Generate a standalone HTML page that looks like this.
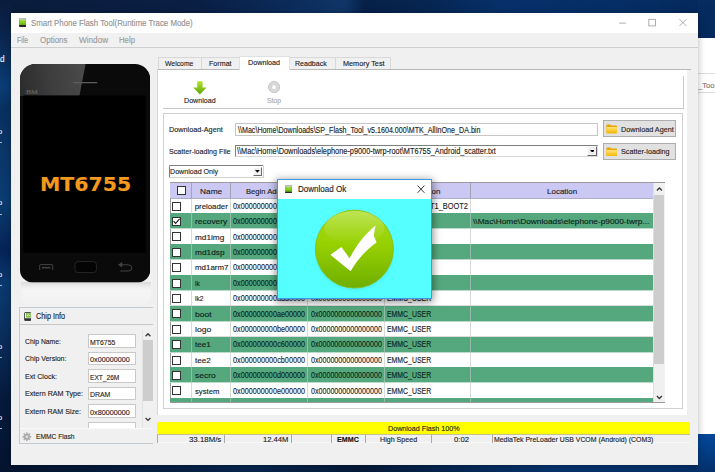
<!DOCTYPE html>
<html><head><meta charset="utf-8"><title>Smart Phone Flash Tool</title><style>
html,body{margin:0;padding:0}
body{width:715px;height:472px;overflow:hidden;position:relative;background:#08203f}
body>div,.a{position:absolute}
.t{position:absolute;white-space:pre;transform-origin:0 0;-webkit-text-stroke:0.13px}
#desk{left:0;top:0;width:715px;height:472px;background:
 linear-gradient(180deg,rgba(0,0,0,0) 0,rgba(0,0,0,0) 100%),
 linear-gradient(100deg,#0a2142 0%,#0c2a55 30%,#08305f 55%,#062450 75%,#071d40 100%)}
</style></head><body>
<div id="desk"></div>
<div style="left:0.00px;top:0.00px;width:715.00px;height:14.00px;background:linear-gradient(90deg,#0a1c3c 0px,#0a1f44 200px,#0a2a58 280px,#103566 345px,#062048 365px,#062652 430px,#06306a 500px,#052d64 650px,#06275a 715px);"></div>
<div style="left:0.00px;top:0.00px;width:12.00px;height:472.00px;background:linear-gradient(180deg,#0a1c3c 0px,#0a2750 40px,#0a3d75 86px,#08305f 110px,#0a3668 150px,#0b3c72 200px,#062455 250px,#0a3a70 285px,#0a2f5e 330px,#051a3c 400px,#04142f 472px);"></div>
<div style="left:0.00px;top:464.00px;width:715.00px;height:8.00px;background:linear-gradient(90deg,#04142f 0,#07264f 35%,#051a3a 50%,#06346e 77%,#05306a 100%);"></div>
<div style="left:697.00px;top:0.00px;width:18.00px;height:40.00px;background:linear-gradient(180deg,#062c60,#05295a);"></div>
<div style="left:697.00px;top:432.00px;width:18.00px;height:40.00px;background:linear-gradient(180deg,#03489a 0,#033f88 45%,#052f6a 100%);"></div>
<div class="t" style="left:0.00px;top:54px;font:8.21px/11px 'Liberation Sans',sans-serif;color:#f4f4f4;">d</div>
<div class="t" style="left:-2.20px;top:126px;font:7.99px/11px 'Liberation Sans',sans-serif;color:#e6e6e6;">o</div>
<div style="left:0.00px;top:142.10px;width:1.80px;height:1.00px;background:#aeb6c6;"></div>
<div class="t" style="left:-2.20px;top:197px;font:7.99px/11px 'Liberation Sans',sans-serif;color:#e6e6e6;">o</div>
<div style="left:0.00px;top:213.60px;width:1.80px;height:1.00px;background:#aeb6c6;"></div>
<div class="t" style="left:-2.20px;top:269px;font:7.99px/11px 'Liberation Sans',sans-serif;color:#e6e6e6;">o</div>
<div style="left:0.00px;top:285.20px;width:1.80px;height:1.00px;background:#aeb6c6;"></div>
<div class="t" style="left:-2.20px;top:341px;font:7.99px/11px 'Liberation Sans',sans-serif;color:#e6e6e6;">o</div>
<div style="left:0.00px;top:356.80px;width:1.80px;height:1.00px;background:#aeb6c6;"></div>
<div class="t" style="left:-2.20px;top:412px;font:7.99px/11px 'Liberation Sans',sans-serif;color:#e6e6e6;">o</div>
<div style="left:0.00px;top:428.40px;width:1.80px;height:1.00px;background:#aeb6c6;"></div>
<div style="left:698.00px;top:37.50px;width:18.00px;height:396.10px;background:#fff;"></div>
<div style="left:698.00px;top:73.20px;width:18.00px;height:1.00px;background:#dcdcdc;"></div>
<div style="left:698.00px;top:91.60px;width:18.00px;height:1.00px;background:#dcdcdc;"></div>
<div class="t" style="left:698.40px;top:80px;font:7.99px/11px 'Liberation Sans',sans-serif;color:#777;transform:scaleX(0.9523);">_Too</div>
<div style="left:11.20px;top:13.00px;width:687.10px;height:451.80px;background:#f0f0f0;box-shadow:0 1px 7px 0 rgba(0,0,0,.30);"></div>
<div style="left:11.20px;top:13.00px;width:687.10px;height:20.30px;background:#fff;"></div>
<svg class="a" style="left:18.9px;top:18.1px" width="7.2" height="9" viewBox="0 0 72 90"><defs><linearGradient id="gi" x1="0" y1="0" x2="0" y2="1"><stop offset="0" stop-color="#a4e04a"/><stop offset="0.45" stop-color="#86cf22"/><stop offset="1" stop-color="#4f9c0e"/></linearGradient></defs><rect x="1" y="1" width="70" height="88" rx="7" fill="#8a8a8a"/><rect x="5" y="14" width="62" height="66" fill="url(#gi)"/><rect x="5" y="4" width="62" height="11" fill="#e2e2e2"/><rect x="2" y="69" width="68" height="20" rx="4" fill="#262626"/></svg>
<div class="t" style="left:31.00px;top:17px;font:9.29px/12px 'Liberation Sans',sans-serif;color:#8f8f8f;transform:scaleX(0.8454);">Smart Phone Flash Tool(Runtime Trace Mode)</div>
<svg class="a" style="left:610px;top:14px" width="88" height="19" viewBox="0 0 88 19"><g stroke="#9a9a9a" stroke-width="0.8" fill="none"><path d="M9.2 9.1H16"/><rect x="38.8" y="5.3" width="6.6" height="6.6"/><path d="M69.5 5.2l6.8 6.8M76.3 5.2l-6.8 6.8"/></g></svg>
<div style="left:11.20px;top:33.30px;width:687.10px;height:13.70px;background:#f1f1f1;"></div>
<div style="left:11.20px;top:47.00px;width:687.10px;height:0.80px;background:#cfcfcf;"></div>
<div class="t" style="left:16.90px;top:34px;font:8.42px/12px 'Liberation Sans',sans-serif;color:#9a9a9a;transform:scaleX(0.8107);">File</div>
<div class="t" style="left:39.60px;top:34px;font:8.42px/12px 'Liberation Sans',sans-serif;color:#9a9a9a;transform:scaleX(0.9511);">Options</div>
<div class="t" style="left:78.60px;top:34px;font:8.42px/12px 'Liberation Sans',sans-serif;color:#9a9a9a;transform:scaleX(0.9750);">Window</div>
<div class="t" style="left:118.60px;top:34px;font:8.42px/12px 'Liberation Sans',sans-serif;color:#9a9a9a;transform:scaleX(0.9239);">Help</div>
<div style="left:20.50px;top:282.00px;width:130.00px;height:23.50px;background:linear-gradient(#d9d9d9 0,#ececec 18%,#f5f5f5 34%,#f4f4f4 60%,#f1f1f1 100%);border-radius:0 0 12px 12px;"></div>
<svg class="a" style="left:20.1px;top:64.1px" width="130.4" height="218.6" viewBox="0 0 130.4 218.6"><defs>
<clipPath id="pc"><path d="M15.5 0H114.9A15.5 15.5 0 0 1 130.4 15.5V205.9A12.6 12.6 0 0 1 117.80000000000001 218.5H12.6A12.6 12.6 0 0 1 0 205.9V15.5A15.5 15.5 0 0 1 15.5 0Z"/></clipPath>
<linearGradient id="pg" x1="0" y1="0" x2="1" y2="0"><stop offset="0" stop-color="#2e2e2e"/><stop offset="0.5" stop-color="#404040"/><stop offset="1" stop-color="#4b4b4b"/></linearGradient>
<linearGradient id="pv" x1="0" y1="0" x2="0" y2="1"><stop offset="0" stop-color="#000" stop-opacity="0"/><stop offset="1" stop-color="#000" stop-opacity=".05"/></linearGradient>
</defs>
<g clip-path="url(#pc)"><rect width="130.4" height="218.6" fill="#0a0a0a"/>
<path d="M0 0H65.6L59.4 32H0z" fill="url(#pg)"/><path d="M0 0H65.6L59.4 32H0z" fill="url(#pv)"/>
<rect x="3.4" y="31.4" width="122.4" height="157.4" fill="#000"/>
<rect x="53" y="18" width="24.4" height="1.3" rx=".6" fill="#5c5c5c"/>
</g>
<g fill="none" stroke="#444" stroke-width="1"><path d="M19.7 206v-4.6q0-.8.8-.8h11.4q.8 0 .8.8v4.6"/><path d="M22 203.7h8.4" stroke-width="1.5"/>
<rect x="55" y="197.6" width="21.4" height="11" rx="3" fill="#040404" stroke="#262626"/>
<path d="M101 200.8h7.6a3.1 3.1 0 0 1 0 6.2h-8.4"/></g><path d="M98 200.8l4.2-2.7v5.4z" fill="#444"/>
</svg>
<div class="t" style="left:26.20px;top:87px;font:7.13px/10px 'Liberation Serif',serif;color:#666;transform:scaleX(1.0635);">BM</div>
<div class="t" style="left:40.30px;top:172px;font:bold 19.5px/25px 'DejaVu Sans',sans-serif;color:#f39a1e;transform:scaleX(1.0497);">MT6755</div>
<div style="left:19.10px;top:307.40px;width:133.90px;height:136.80px;border:1px solid #c3c9d0;border-right:none;box-sizing:border-box;"></div>
<div style="left:19.60px;top:324.00px;width:133.40px;height:0.80px;background:#c6c6c6;"></div>
<svg class="a" style="left:23.6px;top:311.7px" width="7.6" height="9" viewBox="0 0 76 90"><rect x="5" y="5" width="66" height="80" rx="7" fill="#fbfbfb" stroke="#505050" stroke-width="10"/><rect x="20" y="12" width="46" height="44" fill="#7cc242"/><path d="M30 40l14-14 14 14" fill="none" stroke="#f4ffe8" stroke-width="9"/><rect x="6" y="62" width="64" height="24" rx="4" fill="#2e2e2e"/></svg>
<div class="t" style="left:36.00px;top:311px;font:8.21px/11px 'Liberation Sans',sans-serif;color:#222;transform:scaleX(0.8886);">Chip Info</div>
<div class="t" style="left:25.00px;top:336px;font:7.99px/11px 'Liberation Sans',sans-serif;color:#222;transform:scaleX(0.8534);">Chip Name:</div>
<div style="left:88.00px;top:334.40px;width:47.80px;height:13.20px;background:#fff;border:1px solid #c9c9c9;box-sizing:border-box;"></div>
<div class="t" style="left:90.20px;top:337px;font:7.99px/11px 'Liberation Sans',sans-serif;color:#222;transform:scaleX(0.8665);">MT6755</div>
<div class="t" style="left:25.00px;top:353px;font:7.99px/11px 'Liberation Sans',sans-serif;color:#222;transform:scaleX(0.8711);">Chip Version:</div>
<div style="left:88.00px;top:351.90px;width:47.80px;height:13.20px;background:#fff;border:1px solid #c9c9c9;box-sizing:border-box;"></div>
<div class="t" style="left:90.20px;top:354px;font:7.99px/11px 'Liberation Sans',sans-serif;color:#222;transform:scaleX(0.9048);">0x00000000</div>
<div class="t" style="left:25.00px;top:371px;font:7.99px/11px 'Liberation Sans',sans-serif;color:#222;transform:scaleX(0.8898);">Ext Clock:</div>
<div style="left:88.00px;top:369.40px;width:47.80px;height:13.20px;background:#fff;border:1px solid #c9c9c9;box-sizing:border-box;"></div>
<div class="t" style="left:90.20px;top:372px;font:7.99px/11px 'Liberation Sans',sans-serif;color:#222;transform:scaleX(0.8247);">EXT_26M</div>
<div class="t" style="left:25.00px;top:388px;font:7.99px/11px 'Liberation Sans',sans-serif;color:#222;transform:scaleX(0.8966);">Extern RAM Type:</div>
<div style="left:88.00px;top:386.90px;width:47.80px;height:13.20px;background:#fff;border:1px solid #c9c9c9;box-sizing:border-box;"></div>
<div class="t" style="left:90.20px;top:389px;font:7.99px/11px 'Liberation Sans',sans-serif;color:#222;transform:scaleX(0.8671);">DRAM</div>
<div class="t" style="left:25.00px;top:406px;font:7.99px/11px 'Liberation Sans',sans-serif;color:#222;transform:scaleX(0.8882);">Extern RAM Size:</div>
<div style="left:88.00px;top:404.40px;width:47.80px;height:13.20px;background:#fff;border:1px solid #c9c9c9;box-sizing:border-box;"></div>
<div class="t" style="left:90.20px;top:407px;font:7.99px/11px 'Liberation Sans',sans-serif;color:#222;transform:scaleX(0.9048);">0x80000000</div>
<div style="left:88.00px;top:422.00px;width:47.80px;height:6.20px;background:#fff;border:1px solid #c9c9c9;border-bottom:none;box-sizing:border-box;"></div>
<div style="left:142.40px;top:329.50px;width:10.40px;height:98.10px;background:#f0f0f0;border-left:1px solid #e2e2e2;box-sizing:border-box;"></div>
<div style="left:143.40px;top:340.20px;width:9.20px;height:60.60px;background:#cdcdcd;"></div>
<svg class="a" style="left:143px;top:330px" width="10" height="98" viewBox="0 0 10 98"><g fill="none" stroke="#3a3a3a" stroke-width="1.35"><path d="M2.6 6.2l2.4-2.4 2.4 2.4"/><path d="M2.6 88l2.4 2.4 2.4-2.4"/></g></svg>
<div style="left:19.60px;top:428.00px;width:133.40px;height:0.80px;background:#fafafa;"></div>
<svg class="a" style="left:22.4px;top:431.6px" width="9.6" height="9.6" viewBox="-12 -12 24 24"><g fill="#ababab"><circle r="7.4"/><rect x="-2" y="-11" width="4" height="6" transform="rotate(0)"/><rect x="-2" y="-11" width="4" height="6" transform="rotate(45)"/><rect x="-2" y="-11" width="4" height="6" transform="rotate(90)"/><rect x="-2" y="-11" width="4" height="6" transform="rotate(135)"/><rect x="-2" y="-11" width="4" height="6" transform="rotate(180)"/><rect x="-2" y="-11" width="4" height="6" transform="rotate(225)"/><rect x="-2" y="-11" width="4" height="6" transform="rotate(270)"/><rect x="-2" y="-11" width="4" height="6" transform="rotate(315)"/></g><circle r="3" fill="#e6e6e6"/></svg>
<div class="t" style="left:35.80px;top:431px;font:7.99px/11px 'Liberation Sans',sans-serif;color:#222;transform:scaleX(0.8360);">EMMC Flash</div>
<div style="left:157.60px;top:69.00px;width:529.80px;height:346.40px;background:#fff;"></div>
<div style="left:157.60px;top:69.00px;width:533.40px;height:0.80px;background:#b9b9b9;"></div>
<div style="left:157.20px;top:69.00px;width:0.80px;height:346.40px;background:#d6d6d6;"></div>
<div style="left:158.00px;top:57.40px;width:43.60px;height:12.00px;background:#f0f0f0;border:1px solid #d8d8d8;border-bottom:none;box-sizing:border-box;"></div>
<div class="t" style="left:164.60px;top:58px;font:8.1px/11px 'Liberation Sans',sans-serif;color:#222;transform:scaleX(0.8450);">Welcome</div>
<div style="left:201.20px;top:57.40px;width:38.40px;height:12.00px;background:#f0f0f0;border:1px solid #d8d8d8;border-bottom:none;box-sizing:border-box;"></div>
<div class="t" style="left:208.80px;top:58px;font:8.1px/11px 'Liberation Sans',sans-serif;color:#222;transform:scaleX(0.8810);">Format</div>
<div style="left:289.20px;top:57.40px;width:46.40px;height:12.00px;background:#f0f0f0;border:1px solid #d8d8d8;border-bottom:none;box-sizing:border-box;"></div>
<div class="t" style="left:295.40px;top:58px;font:8.1px/11px 'Liberation Sans',sans-serif;color:#222;transform:scaleX(0.8718);">Readback</div>
<div style="left:335.20px;top:57.40px;width:56.00px;height:12.00px;background:#f0f0f0;border:1px solid #d8d8d8;border-bottom:none;box-sizing:border-box;"></div>
<div class="t" style="left:343.00px;top:58px;font:8.1px/11px 'Liberation Sans',sans-serif;color:#222;transform:scaleX(0.9002);">Memory Test</div>
<div style="left:239.30px;top:55.80px;width:50.30px;height:14.40px;background:#fff;border:1px solid #e1e1e1;border-bottom:none;box-sizing:border-box;"></div>
<div class="t" style="left:247.60px;top:57px;font:8.1px/11px 'Liberation Sans',sans-serif;color:#222;transform:scaleX(0.8883);">Download</div>
<div style="left:162.80px;top:75.60px;width:520.80px;height:33.00px;border-right:1px solid #c9c9c9;border-bottom:1px solid #c9c9c9;box-sizing:border-box;"></div>
<svg class="a" style="left:193.4px;top:81px" width="13.8" height="13.6" viewBox="0 0 138 136"><defs><linearGradient id="ga" x1="0" y1="0" x2="0" y2="1"><stop offset="0" stop-color="#b4e632"/><stop offset="1" stop-color="#5fa50a"/></linearGradient></defs><path d="M42 2h54v62h40L69 134 2 64h40z" fill="url(#ga)"/></svg>
<div class="t" style="left:183.80px;top:95px;font:8.1px/11px 'Liberation Sans',sans-serif;color:#222;transform:scaleX(0.8772);">Download</div>
<svg class="a" style="left:268px;top:81px" width="12.2" height="12.2" viewBox="0 0 122 122"><circle cx="61" cy="61" r="56" fill="#d9d9d9" stroke="#bdbdbd" stroke-width="8"/><rect x="40" y="40" width="42" height="42" rx="8" fill="#fff" stroke="#c4c4c4" stroke-width="5"/></svg>
<div class="t" style="left:266.60px;top:95px;font:8.1px/11px 'Liberation Sans',sans-serif;color:#a8a8a8;transform:scaleX(0.8522);">Stop</div>
<div style="left:163.00px;top:112.50px;width:519.80px;height:296.90px;border:1px solid #d0d0d0;box-sizing:border-box;"></div>
<div class="t" style="left:169.00px;top:124px;font:8.1px/11px 'Liberation Sans',sans-serif;color:#222;transform:scaleX(0.8983);">Download-Agent</div>
<div style="left:235.20px;top:123.30px;width:363.00px;height:13.20px;background:#fff;border:1px solid #c6c6c6;box-sizing:border-box;"></div>
<div class="t" style="left:238.20px;top:125px;font:8.21px/11px 'Liberation Sans',sans-serif;color:#222;transform:scaleX(0.8686);">\\Mac\Home\Downloads\SP_Flash_Tool_v5.1604.000\MTK_AllInOne_DA.bin</div>
<div class="t" style="left:169.00px;top:146px;font:8.1px/11px 'Liberation Sans',sans-serif;color:#222;transform:scaleX(0.8827);">Scatter-loading File</div>
<div style="left:235.00px;top:145.10px;width:363.00px;height:11.50px;background:#fff;border:1px solid #7e7e7e;border-right-color:#d8d8d8;border-bottom-color:#d8d8d8;box-sizing:border-box;"></div>
<div class="t" style="left:236.60px;top:146px;font:8.21px/11px 'Liberation Sans',sans-serif;color:#222;transform:scaleX(0.8966);">\\Mac\Home\Downloads\elephone-p9000-twrp-root\MT6755_Android_scatter.txt</div>
<div style="left:587.20px;top:146.20px;width:9.80px;height:9.40px;background:#f0f0f0;border:1px solid #fff;border-right:1.3px solid #6a6a6a;border-bottom:1.3px solid #6a6a6a;box-sizing:border-box;"></div>
<svg class="a" style="left:589.70px;top:149.60px" width="4.8" height="2.8" viewBox="0 0 48 28"><path d="M0 0h48L24 28z" fill="#000"/></svg>
<div style="left:603.30px;top:120.30px;width:72.50px;height:17.00px;background:#e1e1e1;border:1px solid #adadad;box-sizing:border-box;"></div>
<svg class="a" style="left:606.4px;top:124.00px" width="11.4" height="9.6" viewBox="0 0 114 96"><defs><linearGradient id="gf120" x1="0" y1="0" x2="0" y2="1"><stop offset="0" stop-color="#ffe27a"/><stop offset="1" stop-color="#f5b800"/></linearGradient></defs><path d="M4 14q0-8 8-8h30l10 10h50q8 0 8 8v60q0 8-8 8H12q-8 0-8-8z" fill="#e6a700"/><rect x="4" y="30" width="106" height="62" rx="7" fill="url(#gf120)"/></svg>
<div class="t" style="left:620.80px;top:124px;font:8.1px/11px 'Liberation Sans',sans-serif;color:#222;transform:scaleX(0.8950);">Download Agent</div>
<div style="left:603.30px;top:143.10px;width:72.50px;height:16.70px;background:#e1e1e1;border:1px solid #adadad;box-sizing:border-box;"></div>
<svg class="a" style="left:606.4px;top:146.65px" width="11.4" height="9.6" viewBox="0 0 114 96"><defs><linearGradient id="gf143" x1="0" y1="0" x2="0" y2="1"><stop offset="0" stop-color="#ffe27a"/><stop offset="1" stop-color="#f5b800"/></linearGradient></defs><path d="M4 14q0-8 8-8h30l10 10h50q8 0 8 8v60q0 8-8 8H12q-8 0-8-8z" fill="#e6a700"/><rect x="4" y="30" width="106" height="62" rx="7" fill="url(#gf143)"/></svg>
<div class="t" style="left:620.80px;top:146px;font:8.1px/11px 'Liberation Sans',sans-serif;color:#222;transform:scaleX(0.8920);">Scatter-loading</div>
<div style="left:169.40px;top:165.40px;width:94.20px;height:12.20px;background:#fff;border:1px solid #7e7e7e;border-right-color:#cfcfcf;border-bottom-color:#cfcfcf;border-radius:1.5px;box-sizing:border-box;"></div>
<div class="t" style="left:170.40px;top:166px;font:8.1px/11px 'Liberation Sans',sans-serif;color:#222;transform:scaleX(0.8775);">Download Only</div>
<div style="left:252.80px;top:166.60px;width:9.60px;height:9.80px;background:#f0f0f0;border:1px solid #fff;border-right:1.3px solid #6a6a6a;border-bottom:1.3px solid #6a6a6a;box-sizing:border-box;"></div>
<svg class="a" style="left:255.20px;top:170.20px" width="4.8" height="2.8" viewBox="0 0 48 28"><path d="M0 0h48L24 28z" fill="#000"/></svg>
<div style="left:169.60px;top:182.40px;width:495.60px;height:220.60px;background:#fff;border:1px solid #9a9a9a;box-sizing:border-box;overflow:hidden;"></div>
<div style="left:170.20px;top:183.00px;width:483.10px;height:15.00px;background:#cbc9f3;"></div>
<div style="left:170.20px;top:212.90px;width:483.10px;height:0.80px;background:#dcdcdc;"></div>
<div style="left:170.20px;top:213.40px;width:483.10px;height:15.40px;background:#55a87e;"></div>
<div style="left:170.20px;top:228.30px;width:483.10px;height:0.80px;background:#bcdccb;"></div>
<div style="left:170.20px;top:243.70px;width:483.10px;height:0.80px;background:#dcdcdc;"></div>
<div style="left:170.20px;top:244.20px;width:483.10px;height:15.40px;background:#55a87e;"></div>
<div style="left:170.20px;top:259.10px;width:483.10px;height:0.80px;background:#bcdccb;"></div>
<div style="left:170.20px;top:274.50px;width:483.10px;height:0.80px;background:#dcdcdc;"></div>
<div style="left:170.20px;top:275.00px;width:483.10px;height:15.40px;background:#55a87e;"></div>
<div style="left:170.20px;top:289.90px;width:483.10px;height:0.80px;background:#bcdccb;"></div>
<div style="left:170.20px;top:305.30px;width:483.10px;height:0.80px;background:#dcdcdc;"></div>
<div style="left:170.20px;top:305.80px;width:483.10px;height:15.40px;background:#55a87e;"></div>
<div style="left:170.20px;top:320.70px;width:483.10px;height:0.80px;background:#bcdccb;"></div>
<div style="left:170.20px;top:336.10px;width:483.10px;height:0.80px;background:#dcdcdc;"></div>
<div style="left:170.20px;top:336.60px;width:483.10px;height:15.40px;background:#55a87e;"></div>
<div style="left:170.20px;top:351.50px;width:483.10px;height:0.80px;background:#bcdccb;"></div>
<div style="left:170.20px;top:366.90px;width:483.10px;height:0.80px;background:#dcdcdc;"></div>
<div style="left:170.20px;top:367.40px;width:483.10px;height:15.40px;background:#55a87e;"></div>
<div style="left:170.20px;top:382.30px;width:483.10px;height:0.80px;background:#bcdccb;"></div>
<div style="left:170.20px;top:397.70px;width:483.10px;height:0.80px;background:#dcdcdc;"></div>
<div style="left:170.20px;top:398.20px;width:483.10px;height:4.20px;background:#55a87e;"></div>
<div style="left:191.25px;top:183.00px;width:0.90px;height:219.40px;background:rgba(188,198,193,.62);"></div>
<div style="left:229.85px;top:183.00px;width:0.90px;height:219.40px;background:rgba(188,198,193,.62);"></div>
<div style="left:307.05px;top:183.00px;width:0.90px;height:219.40px;background:rgba(188,198,193,.62);"></div>
<div style="left:384.15px;top:183.00px;width:0.90px;height:219.40px;background:rgba(188,198,193,.62);"></div>
<div style="left:469.85px;top:183.00px;width:0.90px;height:219.40px;background:rgba(188,198,193,.62);"></div>
<div style="left:653.00px;top:183.00px;width:0.80px;height:219.40px;background:#dedede;"></div>
<div style="left:172.20px;top:201.60px;width:9.00px;height:9.00px;background:#fff;border:1px solid #333;box-sizing:border-box;"></div>
<div class="t" style="left:194.70px;top:201px;font:7.83px/11px 'Liberation Sans',sans-serif;color:#1c1c1c;">preloader</div>
<div class="t" style="left:232.60px;top:201px;font:8.21px/11px 'Liberation Sans',sans-serif;color:#1c1c1c;transform:scaleX(0.8834);">0x0000000000000000</div>
<div class="t" style="left:310.70px;top:201px;font:8.21px/11px 'Liberation Sans',sans-serif;color:#1c1c1c;transform:scaleX(0.8675);">0x0000000000000000</div>
<div class="t" style="left:387.40px;top:200px;font:8.32px/12px 'Liberation Sans',sans-serif;color:#1c1c1c;transform:scaleX(0.8882);">EMMC_BOOT1_BOOT2</div>
<div style="left:172.20px;top:217.00px;width:9.00px;height:9.00px;background:#fff;border:1px solid #333;box-sizing:border-box;"></div>
<svg class="a" style="left:173.2px;top:218.00px" width="7" height="7" viewBox="0 0 70 70"><path d="M6 32l20 22L66 8" fill="none" stroke="#1a1a1a" stroke-width="11"/></svg>
<div class="t" style="left:194.70px;top:216px;font:7.83px/11px 'Liberation Sans',sans-serif;color:#0c2418;transform:scaleX(1.0758);">recovery</div>
<div class="t" style="left:232.60px;top:216px;font:8.21px/11px 'Liberation Sans',sans-serif;color:#0c2418;transform:scaleX(0.8834);">0x0000000008000000</div>
<div class="t" style="left:310.70px;top:216px;font:8.21px/11px 'Liberation Sans',sans-serif;color:#0c2418;transform:scaleX(0.8675);">0x0000000000000000</div>
<div class="t" style="left:387.40px;top:215px;font:8.32px/12px 'Liberation Sans',sans-serif;color:#0c2418;transform:scaleX(0.8314);">EMMC_USER</div>
<div style="left:172.20px;top:232.40px;width:9.00px;height:9.00px;background:#fff;border:1px solid #333;box-sizing:border-box;"></div>
<div class="t" style="left:194.70px;top:232px;font:7.83px/11px 'Liberation Sans',sans-serif;color:#1c1c1c;transform:scaleX(1.0521);">md1img</div>
<div class="t" style="left:232.60px;top:232px;font:8.21px/11px 'Liberation Sans',sans-serif;color:#1c1c1c;transform:scaleX(0.8834);">0x000000000a000000</div>
<div class="t" style="left:310.70px;top:232px;font:8.21px/11px 'Liberation Sans',sans-serif;color:#1c1c1c;transform:scaleX(0.8675);">0x0000000000000000</div>
<div class="t" style="left:387.40px;top:231px;font:8.32px/12px 'Liberation Sans',sans-serif;color:#1c1c1c;transform:scaleX(0.8314);">EMMC_USER</div>
<div style="left:172.20px;top:247.80px;width:9.00px;height:9.00px;background:#fff;border:1px solid #333;box-sizing:border-box;"></div>
<div class="t" style="left:194.70px;top:247px;font:7.83px/11px 'Liberation Sans',sans-serif;color:#0c2418;transform:scaleX(1.0590);">md1dsp</div>
<div class="t" style="left:232.60px;top:247px;font:8.21px/11px 'Liberation Sans',sans-serif;color:#0c2418;transform:scaleX(0.8834);">0x000000000a800000</div>
<div class="t" style="left:310.70px;top:247px;font:8.21px/11px 'Liberation Sans',sans-serif;color:#0c2418;transform:scaleX(0.8675);">0x0000000000000000</div>
<div class="t" style="left:387.40px;top:246px;font:8.32px/12px 'Liberation Sans',sans-serif;color:#0c2418;transform:scaleX(0.8314);">EMMC_USER</div>
<div style="left:172.20px;top:263.20px;width:9.00px;height:9.00px;background:#fff;border:1px solid #333;box-sizing:border-box;"></div>
<div class="t" style="left:194.70px;top:262px;font:7.83px/11px 'Liberation Sans',sans-serif;color:#1c1c1c;transform:scaleX(1.0129);">md1arm7</div>
<div class="t" style="left:232.60px;top:262px;font:8.21px/11px 'Liberation Sans',sans-serif;color:#1c1c1c;transform:scaleX(0.8884);">0x000000000ac00000</div>
<div class="t" style="left:310.70px;top:262px;font:8.21px/11px 'Liberation Sans',sans-serif;color:#1c1c1c;transform:scaleX(0.8675);">0x0000000000000000</div>
<div class="t" style="left:387.40px;top:261px;font:8.32px/12px 'Liberation Sans',sans-serif;color:#1c1c1c;transform:scaleX(0.8314);">EMMC_USER</div>
<div style="left:172.20px;top:278.60px;width:9.00px;height:9.00px;background:#fff;border:1px solid #333;box-sizing:border-box;"></div>
<div class="t" style="left:194.70px;top:278px;font:7.83px/11px 'Liberation Sans',sans-serif;color:#0c2418;transform:scaleX(0.8665);">lk</div>
<div class="t" style="left:232.60px;top:278px;font:8.21px/11px 'Liberation Sans',sans-serif;color:#0c2418;transform:scaleX(0.8834);">0x000000000ad00000</div>
<div class="t" style="left:310.70px;top:278px;font:8.21px/11px 'Liberation Sans',sans-serif;color:#0c2418;transform:scaleX(0.8675);">0x0000000000000000</div>
<div class="t" style="left:387.40px;top:277px;font:8.32px/12px 'Liberation Sans',sans-serif;color:#0c2418;transform:scaleX(0.8314);">EMMC_USER</div>
<div style="left:172.20px;top:294.00px;width:9.00px;height:9.00px;background:#fff;border:1px solid #333;box-sizing:border-box;"></div>
<div class="t" style="left:194.70px;top:293px;font:7.83px/11px 'Liberation Sans',sans-serif;color:#1c1c1c;transform:scaleX(0.8492);">lk2</div>
<div class="t" style="left:232.60px;top:293px;font:8.21px/11px 'Liberation Sans',sans-serif;color:#1c1c1c;transform:scaleX(0.8834);">0x000000000add0000</div>
<div class="t" style="left:310.70px;top:293px;font:8.21px/11px 'Liberation Sans',sans-serif;color:#1c1c1c;transform:scaleX(0.8675);">0x0000000000000000</div>
<div class="t" style="left:387.40px;top:292px;font:8.32px/12px 'Liberation Sans',sans-serif;color:#1c1c1c;transform:scaleX(0.8314);">EMMC_USER</div>
<div style="left:172.20px;top:309.40px;width:9.00px;height:9.00px;background:#fff;border:1px solid #333;box-sizing:border-box;"></div>
<div class="t" style="left:194.70px;top:309px;font:7.83px/11px 'Liberation Sans',sans-serif;color:#0c2418;transform:scaleX(1.0958);">boot</div>
<div class="t" style="left:232.60px;top:309px;font:8.21px/11px 'Liberation Sans',sans-serif;color:#0c2418;transform:scaleX(0.8834);">0x000000000ae00000</div>
<div class="t" style="left:310.70px;top:309px;font:8.21px/11px 'Liberation Sans',sans-serif;color:#0c2418;transform:scaleX(0.8675);">0x0000000000000000</div>
<div class="t" style="left:387.40px;top:308px;font:8.32px/12px 'Liberation Sans',sans-serif;color:#0c2418;transform:scaleX(0.8314);">EMMC_USER</div>
<div style="left:172.20px;top:324.80px;width:9.00px;height:9.00px;background:#fff;border:1px solid #333;box-sizing:border-box;"></div>
<div class="t" style="left:194.70px;top:324px;font:7.83px/11px 'Liberation Sans',sans-serif;color:#1c1c1c;transform:scaleX(1.1010);">logo</div>
<div class="t" style="left:232.60px;top:324px;font:8.21px/11px 'Liberation Sans',sans-serif;color:#1c1c1c;transform:scaleX(0.8834);">0x000000000be00000</div>
<div class="t" style="left:310.70px;top:324px;font:8.21px/11px 'Liberation Sans',sans-serif;color:#1c1c1c;transform:scaleX(0.8675);">0x0000000000000000</div>
<div class="t" style="left:387.40px;top:323px;font:8.32px/12px 'Liberation Sans',sans-serif;color:#1c1c1c;transform:scaleX(0.8314);">EMMC_USER</div>
<div style="left:172.20px;top:340.20px;width:9.00px;height:9.00px;background:#fff;border:1px solid #333;box-sizing:border-box;"></div>
<div class="t" style="left:194.70px;top:339px;font:7.83px/11px 'Liberation Sans',sans-serif;color:#0c2418;transform:scaleX(1.0433);">tee1</div>
<div class="t" style="left:232.60px;top:339px;font:8.21px/11px 'Liberation Sans',sans-serif;color:#0c2418;transform:scaleX(0.8884);">0x000000000c600000</div>
<div class="t" style="left:310.70px;top:339px;font:8.21px/11px 'Liberation Sans',sans-serif;color:#0c2418;transform:scaleX(0.8675);">0x0000000000000000</div>
<div class="t" style="left:387.40px;top:338px;font:8.32px/12px 'Liberation Sans',sans-serif;color:#0c2418;transform:scaleX(0.8314);">EMMC_USER</div>
<div style="left:172.20px;top:355.60px;width:9.00px;height:9.00px;background:#fff;border:1px solid #333;box-sizing:border-box;"></div>
<div class="t" style="left:194.70px;top:355px;font:7.83px/11px 'Liberation Sans',sans-serif;color:#1c1c1c;transform:scaleX(1.0433);">tee2</div>
<div class="t" style="left:232.60px;top:355px;font:8.21px/11px 'Liberation Sans',sans-serif;color:#1c1c1c;transform:scaleX(0.8884);">0x000000000cb00000</div>
<div class="t" style="left:310.70px;top:355px;font:8.21px/11px 'Liberation Sans',sans-serif;color:#1c1c1c;transform:scaleX(0.8675);">0x0000000000000000</div>
<div class="t" style="left:387.40px;top:354px;font:8.32px/12px 'Liberation Sans',sans-serif;color:#1c1c1c;transform:scaleX(0.8314);">EMMC_USER</div>
<div style="left:172.20px;top:371.00px;width:9.00px;height:9.00px;background:#fff;border:1px solid #333;box-sizing:border-box;"></div>
<div class="t" style="left:194.70px;top:370px;font:7.83px/11px 'Liberation Sans',sans-serif;color:#0c2418;transform:scaleX(1.0811);">secro</div>
<div class="t" style="left:232.60px;top:370px;font:8.21px/11px 'Liberation Sans',sans-serif;color:#0c2418;transform:scaleX(0.8834);">0x000000000d000000</div>
<div class="t" style="left:310.70px;top:370px;font:8.21px/11px 'Liberation Sans',sans-serif;color:#0c2418;transform:scaleX(0.8675);">0x0000000000000000</div>
<div class="t" style="left:387.40px;top:369px;font:8.32px/12px 'Liberation Sans',sans-serif;color:#0c2418;transform:scaleX(0.8314);">EMMC_USER</div>
<div style="left:172.20px;top:386.40px;width:9.00px;height:9.00px;background:#fff;border:1px solid #333;box-sizing:border-box;"></div>
<div class="t" style="left:194.70px;top:386px;font:7.83px/11px 'Liberation Sans',sans-serif;color:#1c1c1c;transform:scaleX(0.9799);">system</div>
<div class="t" style="left:232.60px;top:386px;font:8.21px/11px 'Liberation Sans',sans-serif;color:#1c1c1c;transform:scaleX(0.8834);">0x000000000e000000</div>
<div class="t" style="left:310.70px;top:386px;font:8.21px/11px 'Liberation Sans',sans-serif;color:#1c1c1c;transform:scaleX(0.8675);">0x0000000000000000</div>
<div class="t" style="left:387.40px;top:385px;font:8.32px/12px 'Liberation Sans',sans-serif;color:#1c1c1c;transform:scaleX(0.8314);">EMMC_USER</div>
<div class="t" style="left:473.00px;top:216px;font:7.88px/11px 'Liberation Sans',sans-serif;color:#0c2418;transform:scaleX(1.0570);">\\Mac\Home\Downloads\elephone-p9000-twrp...</div>
<div style="left:177.00px;top:186.00px;width:9.20px;height:9.20px;background:#fff;border:1px solid #333;box-sizing:border-box;"></div>
<div style="left:191.20px;top:183.00px;width:1.00px;height:15.00px;background:#a3a3b6;"></div>
<div style="left:229.80px;top:183.00px;width:1.00px;height:15.00px;background:#a3a3b6;"></div>
<div style="left:307.00px;top:183.00px;width:1.00px;height:15.00px;background:#a3a3b6;"></div>
<div style="left:384.10px;top:183.00px;width:1.00px;height:15.00px;background:#a3a3b6;"></div>
<div style="left:469.80px;top:183.00px;width:1.00px;height:15.00px;background:#a3a3b6;"></div>
<div style="left:170.20px;top:197.50px;width:483.10px;height:0.90px;background:#adadc4;"></div>
<div class="t" style="left:199.80px;top:186px;font:8.1px/11px 'Liberation Sans',sans-serif;color:#1c1c1c;transform:scaleX(1.0274);">Name</div>
<div class="t" style="left:245.80px;top:186px;font:8.1px/11px 'Liberation Sans',sans-serif;color:#1c1c1c;transform:scaleX(0.9419);">Begin Address</div>
<div class="t" style="left:325.00px;top:186px;font:8.1px/11px 'Liberation Sans',sans-serif;color:#1c1c1c;transform:scaleX(0.9231);">End Address</div>
<div class="t" style="left:414.80px;top:186px;font:8.1px/11px 'Liberation Sans',sans-serif;color:#1c1c1c;transform:scaleX(0.9895);">Region</div>
<div class="t" style="left:546.90px;top:186px;font:8.1px/11px 'Liberation Sans',sans-serif;color:#1c1c1c;transform:scaleX(0.9894);">Location</div>
<div style="left:653.80px;top:183.00px;width:10.80px;height:219.40px;background:#f0f0f0;"></div>
<div style="left:654.40px;top:194.60px;width:10.00px;height:169.80px;background:#cdcdcd;"></div>
<svg class="a" style="left:654px;top:183px" width="11" height="220" viewBox="0 0 11 220"><g fill="none" stroke="#3a3a3a" stroke-width="1.35"><path d="M2.9 7.4l2.5-2.5 2.5 2.5"/><path d="M2.9 213l2.5 2.5 2.5-2.5"/></g></svg>
<div style="left:157.00px;top:421.80px;width:533.20px;height:12.40px;background:#ffff00;"></div>
<div class="t" style="left:387.80px;top:423px;font:7.99px/11px 'Liberation Sans',sans-serif;color:#222;transform:scaleX(0.8956);">Download Flash 100%</div>
<div style="left:157.00px;top:434.20px;width:533.20px;height:9.20px;background:#f0f0f0;border-bottom:1px solid #f8f8f8;box-sizing:border-box;"></div>
<div style="left:156.60px;top:434.60px;width:0.80px;height:8.40px;background:#a9a9a9;"></div>
<div style="left:223.90px;top:434.60px;width:0.80px;height:8.40px;background:#a9a9a9;"></div>
<div style="left:290.80px;top:434.60px;width:0.80px;height:8.40px;background:#a9a9a9;"></div>
<div style="left:331.00px;top:434.60px;width:0.80px;height:8.40px;background:#a9a9a9;"></div>
<div style="left:365.00px;top:434.60px;width:0.80px;height:8.40px;background:#a9a9a9;"></div>
<div style="left:431.20px;top:434.60px;width:0.80px;height:8.40px;background:#a9a9a9;"></div>
<div style="left:492.00px;top:434.60px;width:0.80px;height:8.40px;background:#a9a9a9;"></div>
<div style="left:157.00px;top:434.00px;width:533.20px;height:0.80px;background:#c4c48a;"></div>
<div class="t" style="left:189.00px;top:434px;font:7.88px/11px 'Liberation Sans',sans-serif;color:#222;transform:scaleX(0.9965);">33.18M/s</div>
<div class="t" style="left:262.60px;top:434px;font:7.88px/11px 'Liberation Sans',sans-serif;color:#222;transform:scaleX(0.9664);">12.44M</div>
<div class="t" style="left:337.40px;top:434px;font:bold 7.88px/11px 'Liberation Sans',sans-serif;color:#111;transform:scaleX(0.9055);">EMMC</div>
<div class="t" style="left:379.80px;top:434px;font:7.88px/11px 'Liberation Sans',sans-serif;color:#222;transform:scaleX(0.9033);">High Speed</div>
<div class="t" style="left:453.80px;top:434px;font:7.88px/11px 'Liberation Sans',sans-serif;color:#222;transform:scaleX(0.9780);">0:02</div>
<div class="t" style="left:494.40px;top:434px;font:7.88px/11px 'Liberation Sans',sans-serif;color:#222;transform:scaleX(0.8771);">MediaTek PreLoader USB VCOM (Android) (COM3)</div>
<div style="left:277.20px;top:179.20px;width:155.00px;height:119.60px;background:#55ffff;border:1px solid #3c9be8;box-sizing:border-box;box-shadow:0 2px 8px 1px rgba(0,0,0,.45);"></div>
<div style="left:278.00px;top:180.00px;width:153.40px;height:19.30px;background:#fff;"></div>
<svg class="a" style="left:285.4px;top:184.5px" width="7" height="8.8" viewBox="0 0 72 90"><rect x="1" y="1" width="70" height="88" rx="7" fill="#8a8a8a"/><rect x="5" y="14" width="62" height="66" fill="url(#gi)"/><rect x="5" y="4" width="62" height="11" fill="#e2e2e2"/><rect x="2" y="69" width="68" height="20" rx="4" fill="#262626"/></svg>
<div class="t" style="left:297.70px;top:183px;font:8.64px/12px 'Liberation Sans',sans-serif;color:#1a1a1a;transform:scaleX(0.9312);">Download Ok</div>
<svg class="a" style="left:417.4px;top:184.8px" width="8" height="8.4" viewBox="0 0 8 8.4"><path d="M0.6 0.6l6.8 7.2M7.4 0.6l-6.8 7.2" stroke="#222" stroke-width="0.9" fill="none"/></svg>
<svg class="a" style="left:310px;top:205px" width="90" height="92" viewBox="310 205 90 92"><defs>
<linearGradient id="gc" x1="0" y1="0" x2="0" y2="1"><stop offset="0" stop-color="#a9dc1e"/><stop offset="0.45" stop-color="#96d000"/><stop offset="1" stop-color="#6fae00"/></linearGradient>
<linearGradient id="gg" x1="0" y1="0" x2="0" y2="1"><stop offset="0" stop-color="#fff" stop-opacity=".24"/><stop offset="1" stop-color="#fff" stop-opacity="0"/></linearGradient>
<radialGradient id="gs"><stop offset="0.7" stop-color="#2a6a6a" stop-opacity=".35"/><stop offset="1" stop-color="#2a6a6a" stop-opacity="0"/></radialGradient></defs>
<ellipse cx="354.4" cy="251" rx="41" ry="41" fill="url(#gs)"/>
<circle cx="354.4" cy="249.1" r="39" fill="url(#gc)" stroke="#86bb10" stroke-width="0.8"/>
<ellipse cx="354.4" cy="228" rx="30" ry="17" fill="url(#gg)"/>
<path d="M330.4 254.7L341.4 247L349.6 258.2C356 246 365 234 375.7 225.6C374.6 230 374 233.5 373.9 236L376.6 242.6C366 250 357 260 350.6 271.2Z" fill="#fff"/>
</svg>
</body></html>
